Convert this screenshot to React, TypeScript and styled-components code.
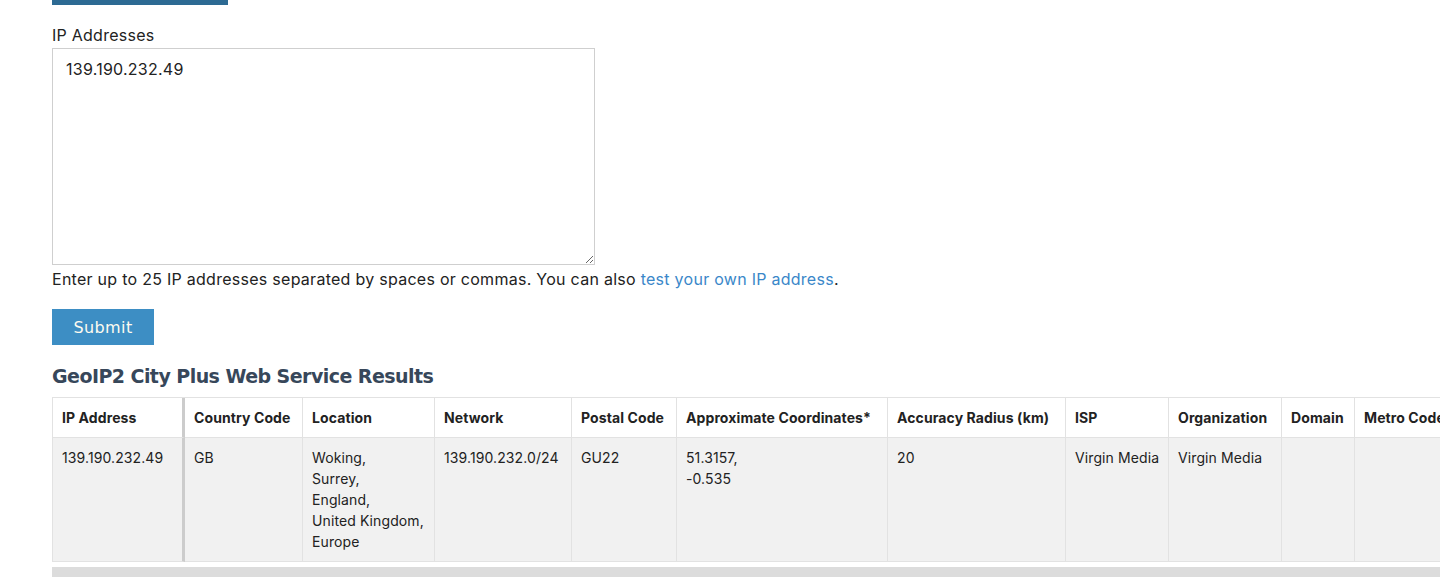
import React from "react";
import styled, { createGlobalStyle } from "styled-components";

const Global = createGlobalStyle`
  html, body {
    margin: 0;
    padding: 0;
    overflow: hidden;
    background: #ffffff;
  }
  body {
    font-family: Inter, "Liberation Sans", Arial, sans-serif;
    color: #222222;
  }
`;

const Page = styled.div`
  padding-left: 52px;
  display: flex;
  flex-direction: column;
  align-items: flex-start;
`;

const TopBar = styled.div`
  width: 176px;
  height: 5px;
  background: #2d6a93;
`;

const Label = styled.label`
  display: block;
  margin-top: 18px;
  margin-bottom: 1px;
  font-size: 16px;
  line-height: 24px;
  letter-spacing: 0.25px;
  color: #222;
`;

const TextArea = styled.textarea`
  display: block;
  box-sizing: border-box;
  width: 543px;
  height: 217px;
  margin: 0;
  padding: 8px 13px;
  border: 1px solid #cfcfcf;
  border-radius: 0;
  font-family: Inter, "Liberation Sans", Arial, sans-serif;
  font-size: 16px;
  line-height: 24px;
  letter-spacing: 0.25px;
  color: #222;
  resize: both;
  outline: none;
`;

const Help = styled.p`
  margin: 2px 0 0;
  font-size: 16px;
  line-height: 24px;
  letter-spacing: 0.27px;
  color: #222;
`;

const Link = styled.a`
  color: #3a87c9;
  text-decoration: none;
`;

const SubmitButton = styled.button`
  margin-top: 18px;
  width: 102px;
  height: 36px;
  border: none;
  border-radius: 0;
  background: #3d8ec4;
  color: #fdfbf0;
  font-family: "DejaVu Sans", "Open Sans", sans-serif;
  font-size: 16px;
  font-weight: 500;
  letter-spacing: 0.4px;
  cursor: pointer;
`;

const Heading = styled.h2`
  margin: 19px 0 9px;
  font-family: "DejaVu Sans", "Open Sans", sans-serif;
  font-weight: 700;
  font-size: 19px;
  line-height: 24px;
  color: #37475a;
  letter-spacing: -0.55px;
`;

const TableWrap = styled.div`
  width: calc(100vw - 52px);
  overflow: hidden;
`;

const Table = styled.table`
  table-layout: fixed;
  border-collapse: separate;
  border-spacing: 0;
  border-top: 1px solid #e2e2e2;
  border-left: 1px solid #e2e2e2;
  width: 1413px;
  font-size: 14px;
  line-height: 21px;
  letter-spacing: 0.1px;
  color: #222;
`;

const Cell = styled.td<{ $w: number; $sticky?: boolean }>`
  box-sizing: border-box;
  width: ${(p) => p.$w}px;
  padding: 9px 9px;
  vertical-align: top;
  text-align: left;
  white-space: nowrap;
  border-bottom: 1px solid #e2e2e2;
  border-right: ${(p) => (p.$sticky ? "3px solid #cccccc" : "1px solid #e2e2e2")};
`;

const HeadCell = styled(Cell).attrs({ as: "th" })`
  font-weight: 700;
  background: #ffffff;
`;

const BodyCell = styled(Cell)`
  background: #f1f1f1;
`;

const ScrollTrack = styled.div`
  width: calc(100vw - 52px);
  height: 12px;
  margin-top: 5px;
  background: #dcdcdc;
`;

const columns: { title: string; w: number; value: string[] }[] = [
  { title: "IP Address", w: 132, value: ["139.190.232.49"] },
  { title: "Country Code", w: 118, value: ["GB"] },
  { title: "Location", w: 132, value: ["Woking,", "Surrey,", "England,", "United Kingdom,", "Europe"] },
  { title: "Network", w: 137, value: ["139.190.232.0/24"] },
  { title: "Postal Code", w: 105, value: ["GU22"] },
  { title: "Approximate Coordinates*", w: 211, value: ["51.3157,", "-0.535"] },
  { title: "Accuracy Radius (km)", w: 178, value: ["20"] },
  { title: "ISP", w: 103, value: ["Virgin Media"] },
  { title: "Organization", w: 113, value: ["Virgin Media"] },
  { title: "Domain", w: 73, value: [] },
  { title: "Metro Code", w: 110, value: [] },
];

export default function App() {
  return (
    <>
      <Global />
      <Page>
        <TopBar />
        <Label htmlFor="ips">IP Addresses</Label>
        <TextArea id="ips" defaultValue="139.190.232.49" />
        <Help>
          Enter up to 25 IP addresses separated by spaces or commas. You can also{" "}
          <Link href="#">test your own IP address</Link>.
        </Help>
        <SubmitButton type="button">Submit</SubmitButton>
        <Heading>GeoIP2 City Plus Web Service Results</Heading>
        <TableWrap>
          <Table>
            <thead>
              <tr>
                {columns.map((c, i) => (
                  <HeadCell key={c.title} $w={c.w} $sticky={i === 0}>
                    {c.title}
                  </HeadCell>
                ))}
              </tr>
            </thead>
            <tbody>
              <tr>
                {columns.map((c, i) => (
                  <BodyCell key={c.title} $w={c.w} $sticky={i === 0}>
                    {c.value.map((v, j) => (
                      <React.Fragment key={j}>
                        {j > 0 && <br />}
                        {v}
                      </React.Fragment>
                    ))}
                  </BodyCell>
                ))}
              </tr>
            </tbody>
          </Table>
        </TableWrap>
        <ScrollTrack />
      </Page>
    </>
  );
}
